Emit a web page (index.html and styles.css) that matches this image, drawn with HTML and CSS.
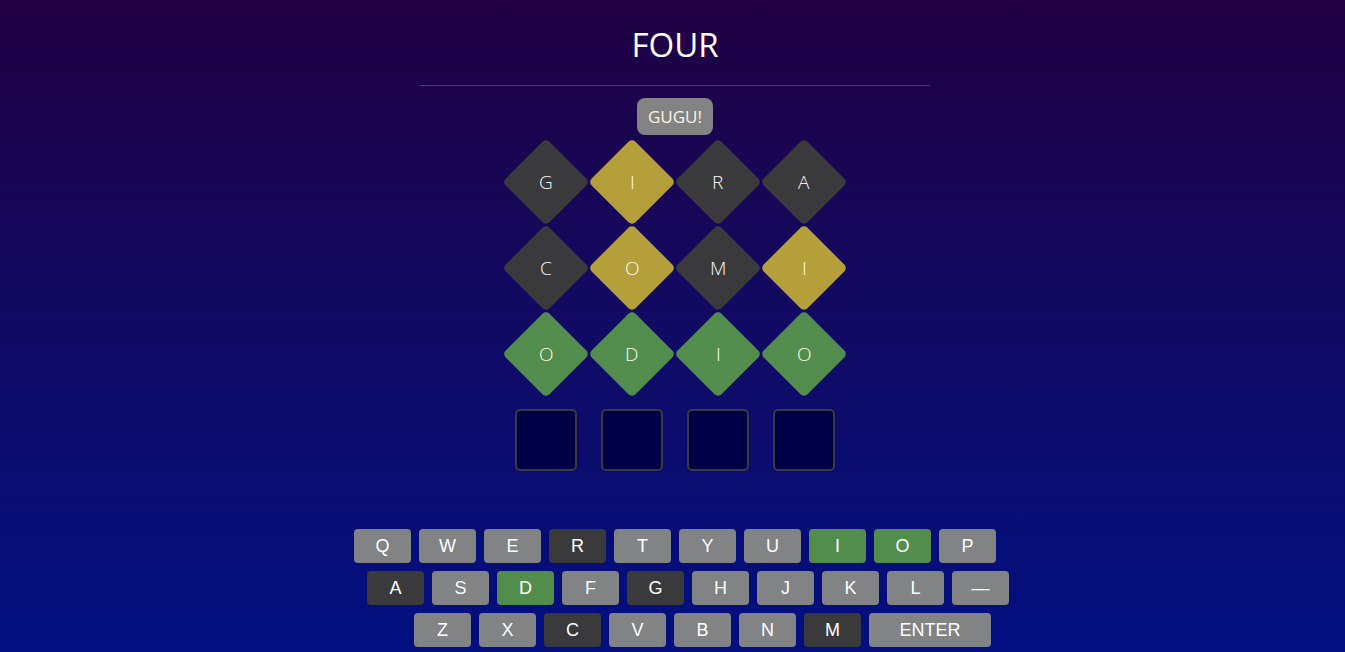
FILE: index.html
```html
<!DOCTYPE html>
<html>
<head>
  <title>Four</title>
  <link rel="stylesheet" href="styles.css">
</head>
<body>
  <header class="title">FOUR</header>
  <div class="toast">GUGU!</div>

  <div class="board">
    <div class="row">
      <div class="tile absent"><span>G</span></div>
      <div class="tile present"><span>I</span></div>
      <div class="tile absent"><span>R</span></div>
      <div class="tile absent"><span>A</span></div>
    </div>
    <div class="row">
      <div class="tile absent"><span>C</span></div>
      <div class="tile present"><span>O</span></div>
      <div class="tile absent"><span>M</span></div>
      <div class="tile present"><span>I</span></div>
    </div>
    <div class="row">
      <div class="tile correct"><span>O</span></div>
      <div class="tile correct"><span>D</span></div>
      <div class="tile correct"><span>I</span></div>
      <div class="tile correct"><span>O</span></div>
    </div>
    <div class="row">
      <div class="empty"></div>
      <div class="empty"></div>
      <div class="empty"></div>
      <div class="empty"></div>
    </div>
  </div>

  <div class="keyboard">
    <div class="krow">
      <button class="key">Q</button><button class="key">W</button><button class="key">E</button>
      <button class="key dark">R</button><button class="key">T</button><button class="key">Y</button>
      <button class="key">U</button><button class="key green">I</button><button class="key green">O</button>
      <button class="key">P</button>
    </div>
    <div class="krow second">
      <button class="key dark">A</button><button class="key">S</button><button class="key green">D</button>
      <button class="key">F</button><button class="key dark">G</button><button class="key">H</button>
      <button class="key">J</button><button class="key">K</button><button class="key">L</button>
      <button class="key">&mdash;</button>
    </div>
    <div class="krow third">
      <button class="key">Z</button><button class="key">X</button><button class="key dark">C</button>
      <button class="key">V</button><button class="key">B</button><button class="key">N</button>
      <button class="key dark">M</button><button class="key wide">ENTER</button>
    </div>
  </div>
</body>
</html>
```
FILE: styles.css
```css
html, body {
  height: 100%;
}
body {
  margin: 0;
  padding-left: 5px;
  box-sizing: border-box;
  background: linear-gradient(to bottom, #200042 0%, #110a64 50%, #020f80 100%);
  color: #f2f2f2;
  font-family: "Open Sans", Lato, sans-serif;
  display: flex;
  flex-direction: column;
  align-items: center;
  overflow: hidden;
}
.title {
  width: 510px;
  height: 86px;
  box-sizing: border-box;
  padding-top: 22px;
  line-height: 46px;
  text-align: center;
  font-size: 33px;
  font-weight: 400;
  border-bottom: 1px solid #4a3f6c;
  color: #fff;
}
.toast {
  margin-top: 12px;
  background-color: #838383;
  color: #fbf4e4;
  border-radius: 8px;
  padding: 0 11px;
  height: 37px;
  line-height: 37px;
  font-size: 17px;
  font-weight: 400;
}
.board {
  margin-top: 16px;
  display: flex;
  flex-direction: column;
  align-items: center;
  gap: 24px;
}
.row {
  display: flex;
  gap: 24px;
}
.tile {
  width: 62px;
  height: 62px;
  border-radius: 5px;
  transform: rotate(45deg);
  display: flex;
  align-items: center;
  justify-content: center;
  font-size: 19px;
  font-weight: 300;
}
.tile span {
  transform: rotate(-45deg);
}
.absent {
  background-color: #3a3a3c;
  color: #f8f9ff;
}
.present {
  background-color: #b59f3b;
  color: #fffbe6;
}
.correct {
  background-color: #538d4e;
  color: #f8ffe8;
}
.empty {
  width: 58px;
  height: 58px;
  border: 2px solid #3a3a3c;
  border-radius: 5px;
  background-color: #000046;
}
.keyboard {
  margin-top: 58px;
  width: 642px;
  display: flex;
  flex-direction: column;
  gap: 8px;
}
.krow {
  display: flex;
  gap: 8px;
}
.krow.second {
  margin-left: 13px;
}
.krow.third {
  margin-left: 60px;
}
.key {
  flex-shrink: 0;
  width: 57px;
  height: 34px;
  border: none;
  border-radius: 4px;
  background-color: #818384;
  color: #fff;
  font-family: Arial, "Liberation Sans", sans-serif;
  font-size: 18px;
  padding: 0;
}
.key.dark {
  background-color: #3a3a3c;
}
.key.green {
  background-color: #538d4e;
}
.key.wide {
  width: 122px;
}
```
